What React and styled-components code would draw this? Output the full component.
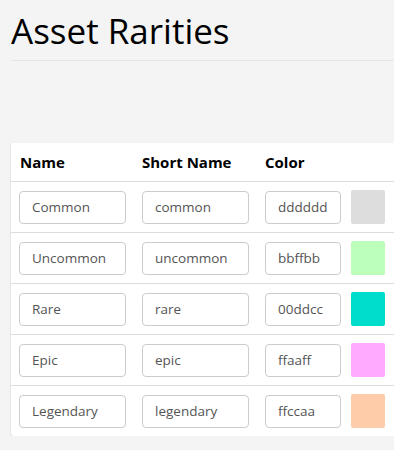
import React from 'react'
import styled, { createGlobalStyle } from 'styled-components'

const GlobalStyle = createGlobalStyle`
  html, body {
    margin: 0;
    padding: 0;
    background: #f4f4f4;
    font-family: "Open Sans", "Noto Sans", sans-serif;
    overflow: hidden;
  }
`

const Page = styled.div`
  padding: 0 0 0 11px;
`

const Title = styled.h1`
  margin: 0;
  padding-top: 11px;
  padding-bottom: 9px;
  font-size: 35px;
  font-weight: 400;
  line-height: 40px;
  color: #000;
  border-bottom: 1px solid #e6e6e6;
`

const Card = styled.div`
  margin-top: 82px;
  width: 420px;
  background: #fff;
  border-radius: 3px;
  box-shadow: 0 1px 2px rgba(0, 0, 0, 0.18);
`

const Table = styled.table`
  border-collapse: collapse;
  width: 100%;
`

const HeadCell = styled.th`
  text-align: left;
  font-size: 15px;
  font-weight: 700;
  color: #000;
  height: 38px;
  padding: 0 8px 0 ${p => p.$first ? '9px' : '8px'};
`

const Row = styled.tr`
  border-top: 1px solid #dcdcdc;
`

const Cell = styled.td`
  padding: 8px 8px;
  vertical-align: middle;
  width: ${p => p.$width || 'auto'};
`

const Field = styled.input`
  box-sizing: border-box;
  width: ${p => p.$width};
  height: 33px;
  padding: 0 12px;
  border: 1px solid #cccccc;
  border-radius: 4px;
  font-family: inherit;
  font-size: 13.5px;
  color: #555;
  background: #fff;
  outline: none;
  display: block;
`

const Swatch = styled.div`
  width: 34px;
  height: 34px;
  border-radius: 2px;
  background: ${p => p.$color};
  margin-left: -6px;
`

const rarities = [
  { name: 'Common', short: 'common', color: 'dddddd' },
  { name: 'Uncommon', short: 'uncommon', color: 'bbffbb' },
  { name: 'Rare', short: 'rare', color: '00ddcc' },
  { name: 'Epic', short: 'epic', color: 'ffaaff' },
  { name: 'Legendary', short: 'legendary', color: 'ffccaa' },
]

export default function App() {
  return (
    <Page>
      <GlobalStyle />
      <Title>Asset Rarities</Title>
      <Card>
        <Table>
          <thead>
            <tr>
              <HeadCell $first>Name</HeadCell>
              <HeadCell>Short Name</HeadCell>
              <HeadCell>Color</HeadCell>
              <HeadCell />
            </tr>
          </thead>
          <tbody>
            {rarities.map(r => (
              <Row key={r.short}>
                <Cell $width="107px"><Field $width="107px" defaultValue={r.name} /></Cell>
                <Cell $width="107px"><Field $width="107px" defaultValue={r.short} /></Cell>
                <Cell $width="76px"><Field $width="76px" defaultValue={r.color} /></Cell>
                <Cell><Swatch $color={'#' + r.color} /></Cell>
              </Row>
            ))}
          </tbody>
        </Table>
      </Card>
    </Page>
  )
}
